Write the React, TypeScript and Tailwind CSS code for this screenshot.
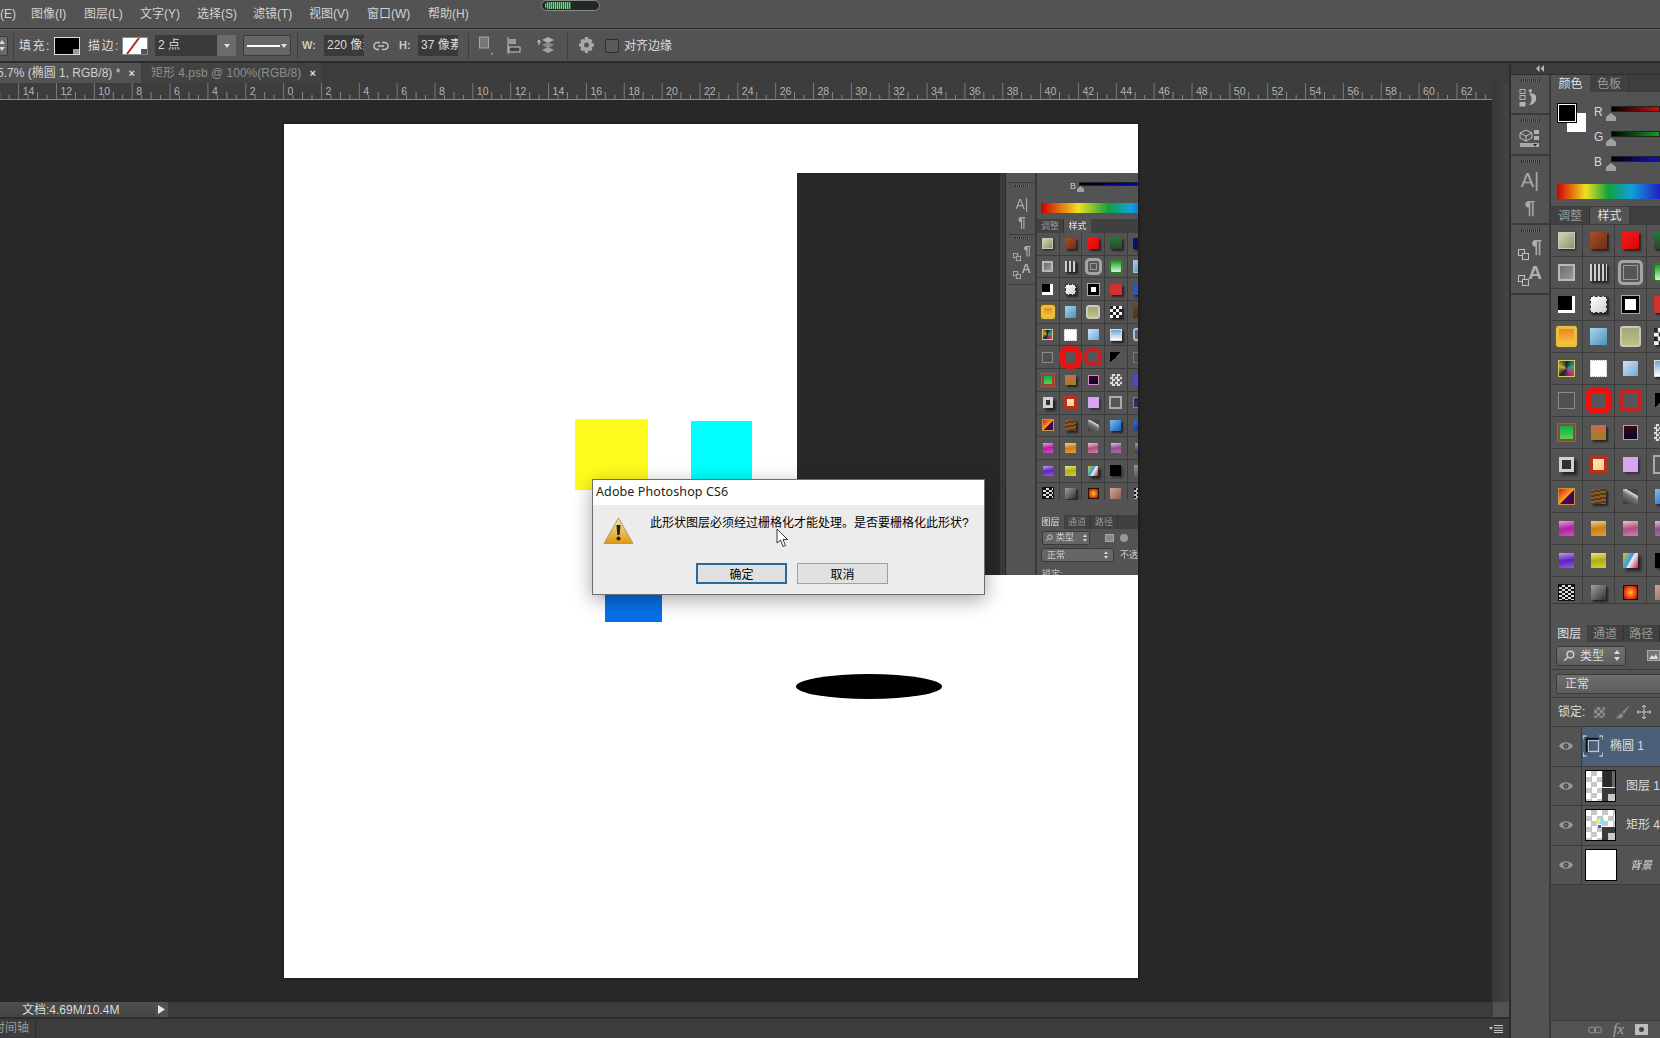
import React from "react";

const SWATCHES: string[] = [
  "w-[52%] h-[52%] bg-[linear-gradient(135deg,#d4d4b8,#8f8f70)] border border-[#c8c8b4] shadow-[1px_1px_2px_#222]",
  "w-[52%] h-[52%] bg-[linear-gradient(135deg,#a8502c,#6e2c14)] shadow-[2px_2px_2px_#222]",
  "w-[52%] h-[52%] bg-[linear-gradient(135deg,#f81818,#d80808)] shadow-[2px_2px_2px_#222]",
  "w-[52%] h-[52%] bg-[linear-gradient(180deg,#1e7a32,#33422a)] shadow-[2px_2px_2px_#222]",
  "w-[52%] h-[52%] bg-[linear-gradient(135deg,#0a1a80,#060a30)] shadow-[2px_2px_2px_#222]",

  "w-[52%] h-[52%] bg-[linear-gradient(135deg,#6c6c6c,#9a9a9a)] border-2 border-[#b8b8b8]",
  "w-[52%] h-[52%] bg-[repeating-linear-gradient(90deg,#cfcfcf_0_2px,#3a3a3a_2px_4px)] shadow-[2px_2px_2px_#222]",
  "w-[78%] h-[78%] bg-[#555555] rounded-[5px] border-[3px] border-[#a4a4a4] outline outline-1 -outline-offset-[6px] outline-[#999999]",
  "w-[58%] h-[58%] bg-[linear-gradient(180deg,#1f9a26,#d8f4d8)] rounded-[2px] border border-[#2a7a22] shadow-[0_0_3px_#3a9a30]",
  "w-[52%] h-[62%] bg-[linear-gradient(135deg,#9cc8e0,#5a90b8)] border border-[#a8c4d4]",

  "w-[52%] h-[52%] bg-black border-r-[3px] border-b-[3px] border-white",
  "w-[52%] h-[52%] bg-[linear-gradient(135deg,#ffffff,#cfcfcf)] border border-dashed border-[#333333] shadow-[2px_2px_2px_#222]",
  "w-[52%] h-[52%] bg-white border-[3px] border-black outline outline-1 outline-[#aaaaaa]",
  "w-[52%] h-[52%] bg-[#d03030] shadow-[2px_2px_2px_#222]",
  "w-[52%] h-[52%] bg-[#3550c8] shadow-[2px_2px_2px_#222]",

  "w-[66%] h-[66%] bg-[linear-gradient(180deg,#e88a20,#ffc040)] border-[3px] border-[#e8c040] rounded-[2px] outline outline-1 outline-[#7a5a10]",
  "w-[52%] h-[52%] bg-[linear-gradient(135deg,#a8d8ee,#4c90b8)]",
  "w-[66%] h-[66%] bg-[linear-gradient(180deg,#a4a478,#c0c088)] border-2 border-[#c8c8c0] rounded-[3px]",
  "w-[58%] h-[58%] bg-[repeating-conic-gradient(#f4f4f4_0_25%,#222222_0_50%)] bg-size-[50%_50%] shadow-[2px_2px_2px_#222]",
  "w-[52%] h-[52%] bg-[linear-gradient(135deg,#6a4a10,#3a2a10)]",

  "w-[52%] h-[52%] bg-[conic-gradient(#123,#2a8,#c28,#123,#ca3,#123)] border border-[#d8c860]",
  "w-[56%] h-[56%] bg-white border border-dotted border-[#bbbbbb]",
  "w-[50%] h-[50%] bg-[linear-gradient(135deg,#cfe4f4,#6ea8dc)]",
  "w-[56%] h-[56%] bg-[linear-gradient(180deg,#6aa4dc,#ffffff)] border border-[#dddddd] shadow-[2px_2px_2px_#222]",
  "w-[52%] h-[62%] bg-[#556688] rounded-[3px] border-2 border-[#b0c0d0]",

  "w-[52%] h-[52%] bg-[#505050] border border-[#8a8a8a]",
  "w-[50%] h-[50%] bg-[#565656] rounded-[3px] outline outline-[6px] outline-[#ee1010]",
  "w-[48%] h-[48%] bg-[#565656] rounded-[2px] outline outline-[4px] outline-[#c82020]",
  "w-[50%] h-[50%] bg-[linear-gradient(135deg,#000000_50%,#555555_50%)]",
  "w-[52%] h-[52%] bg-[#505050] border border-[#777777]",

  "w-[56%] h-[56%] bg-[linear-gradient(180deg,#0cb040,#5ed050)] border-2 border-[#8a4a3a] outline outline-1 outline-[#c05040]",
  "w-[50%] h-[50%] bg-[linear-gradient(180deg,#c86a50,#a08020)] shadow-[2px_2px_2px_#222]",
  "w-[50%] h-[50%] bg-[linear-gradient(180deg,#400818,#05052a)] border border-[#d888c0]",
  "w-[52%] h-[52%] bg-[repeating-conic-gradient(#dddddd_0_25%,#666666_0_50%)] bg-size-[5px_5px]",
  "w-[40%] h-[52%] bg-[#4a4ad0] shadow-[0_0_3px_#4a4ad0]",

  "w-[48%] h-[48%] bg-[#303030] border-[3px] border-[#d0d0d0] shadow-[3px_3px_3px_#222]",
  "w-[58%] h-[58%] bg-[linear-gradient(135deg,#fff0c0,#ffc878)] border-[3px] border-[#b83020]",
  "w-[50%] h-[50%] bg-[#d8a4ec] shadow-[2px_2px_2px_#334]",
  "w-[60%] h-[60%] bg-[#555555] border-2 border-[#aaaaaa]",
  "w-[48%] h-[52%] bg-[#3a2a5a] border border-[#8a7aa0]",

  "w-[56%] h-[56%] bg-[linear-gradient(135deg,#d81818,#ffa020_50%,#40085a_55%)] border border-[#c89040]",
  "w-[50%] h-[50%] bg-[repeating-linear-gradient(170deg,#8a5a28_0_2px,#5a3a18_2px_4px)] shadow-[2px_2px_2px_#222]",
  "w-[50%] h-[50%] bg-[linear-gradient(30deg,#333333,#777777_50%,#dddddd_70%,#444444_72%)]",
  "w-[50%] h-[50%] bg-[linear-gradient(135deg,#80c0f0,#1060b0)] shadow-[2px_2px_2px_#222]",
  "w-[40%] h-[50%] bg-[linear-gradient(135deg,#3070e0,#102060)]",

  "w-[48%] h-[48%] bg-[linear-gradient(170deg,#e8a0e0,#b020a0_50%,#d050c0)]",
  "w-[48%] h-[48%] bg-[linear-gradient(170deg,#f0d090,#c88010_50%,#e0a040)]",
  "w-[48%] h-[48%] bg-[linear-gradient(170deg,#f0c0d8,#b05080_50%,#d080a8)]",
  "w-[48%] h-[48%] bg-[linear-gradient(170deg,#e0c0e0,#905090_50%,#b070b0)]",
  "w-[36%] h-[48%] bg-[linear-gradient(170deg,#a090c0,#402060)]",

  "w-[48%] h-[48%] bg-[linear-gradient(170deg,#c0a0f0,#6020c0_50%,#9060e0)]",
  "w-[48%] h-[48%] bg-[linear-gradient(170deg,#e8e880,#b0b010_50%,#d0d040)]",
  "w-[48%] h-[48%] bg-[linear-gradient(120deg,#e0c020,#30a0e0_45%,#f0f0f0_55%,#c02040)] shadow-[3px_3px_3px_#222]",
  "w-[50%] h-[50%] bg-black shadow-[2px_2px_2px_#333]",
  "w-[40%] h-[50%] bg-[linear-gradient(135deg,#999999,#444444)]",

  "w-[56%] h-[56%] bg-[repeating-conic-gradient(#dddddd_0_25%,#111111_0_50%)] bg-size-[6px_4px] border border-[#111111]",
  "w-[50%] h-[50%] bg-[linear-gradient(135deg,#a0a0a0,#303030)] shadow-[2px_2px_2px_#222]",
  "w-[50%] h-[50%] bg-[radial-gradient(circle,#ffc030,#e03010_70%,#801000)] border border-[#201000]",
  "w-[50%] h-[50%] bg-[linear-gradient(135deg,#d0a898,#906050)]",
  "w-[44%] h-[50%] bg-[repeating-conic-gradient(#bbbbbb_0_25%,#111111_0_50%)] bg-size-[5px_4px]",
];

function StyleGrid({ small }: { small?: boolean }) {
  return (
    <div className={small ? "h-[267px] overflow-hidden" : "h-[378px] shrink-0 overflow-hidden"}>
      <div className={small ? "grid grid-cols-[repeat(5,22.7px)] auto-rows-[22.7px]" : "grid grid-cols-[repeat(5,32px)] auto-rows-[32px]"}>
        {SWATCHES.map((c, i) => (
          <div key={i} className="flex items-center justify-center border-r border-b border-[#3c3c3c]">
            <div className={c} />
          </div>
        ))}
      </div>
    </div>
  );
}

function Tabs({ items, active, small }: { items: string[]; active: number; small?: boolean }) {
  return (
    <div className={small ? "flex h-[14px] bg-[#404040] text-[9px]" : "flex h-[17px] shrink-0 bg-[#3e3e3e] text-[12px]"}>
      {items.map((t, i) => (
        <div
          key={t}
          className={
            (small ? "w-[27px] " : "w-[39px] ") +
            (i === active ? "bg-[#535353] text-[#e0e0e0] " : "bg-[#414141] text-[#9a9a9a] border-r border-[#333333] ") +
            "flex items-center justify-center leading-none"
          }
        >
          {t}
        </div>
      ))}
    </div>
  );
}

function Stepper({ small }: { small?: boolean }) {
  return (
    <svg width={small ? 4 : 6} height={small ? 8 : 11} viewBox="0 0 6 11" className="shrink-0">
      <path d="M3 0 6 4H0zM3 11 0 7h6z" fill="#d8d8d8" />
    </svg>
  );
}

function Search({ s = 12 }: { s?: number }) {
  return (
    <svg width={s} height={s} viewBox="0 0 12 12" fill="none" stroke="#cfcfcf" strokeWidth="1.4">
      <circle cx="7.4" cy="4.6" r="3.4" />
      <path d="M5 7 1.2 10.8" />
    </svg>
  );
}

function Eye() {
  return (
    <svg width="14" height="10" viewBox="0 0 14 10">
      <path d="M0 5C2.500 0 11.500 0 14 5 11.500 10 2.500 10 0 5z" fill="#989898" />
      <circle cx="7" cy="5" r="2.600" fill="#484848" />
      <circle cx="7" cy="5" r="1.100" fill="#7a7a7a" />
    </svg>
  );
}

function Chevrons() {
  return (
    <svg width="8" height="7" viewBox="0 0 8 7" fill="#b8b8b8">
      <path d="M3.5 0v7L0 3.500zM8 0v7L4.500 3.500z" />
    </svg>
  );
}

function Grip({ small }: { small?: boolean }) {
  return <div className={(small ? "w-[14px] h-[2px]" : "w-[19px] h-[3px]") + " mx-auto bg-[repeating-linear-gradient(90deg,#2c2c2c_0_1px,#6a6a6a_1px_2px)]"} />;
}

function HistoryIcon() {
  return (
    <svg width="22" height="18" viewBox="0 0 22 18" fill="none">
      <rect x="1" y="0.500" width="5" height="4" stroke="#b4b4b4" />
      <rect x="1" y="6.500" width="5" height="4" stroke="#b4b4b4" />
      <rect x="0.500" y="13" width="6" height="4.500" fill="#b4b4b4" />
      <path d="M10 5C16 3 18 7 17 11 16 14 13 16 10 16 13 13 14 8 10 5z" fill="#b4b4b4" />
      <path d="M9 1 13 0 12 5z" fill="#b4b4b4" />
    </svg>
  );
}

function CubeIcon() {
  return (
    <svg width="22" height="20" viewBox="0 0 22 20" fill="none">
      <path d="M7 1 13 4V9L7 12 1 9V4z" stroke="#c0c0c0" />
      <path d="M1 4 7 7 13 4M7 7V12" stroke="#c0c0c0" />
      <rect x="15" y="1" width="5" height="4" fill="#b0b0b0" />
      <rect x="15" y="7" width="5" height="4" fill="#b0b0b0" />
      <rect x="1" y="14" width="19" height="4" fill="#a8a8a8" />
      <path d="M14 15h4l-2 2.500z" fill="#222222" />
    </svg>
  );
}

function StackedGlyph({ glyph, small }: { glyph: string; small?: boolean }) {
  return (
    <div className={(small ? "w-[18px] h-[16px]" : "w-[24px] h-[22px]") + " relative"}>
      <span className={(small ? "text-[13px]" : "text-[19px]") + " absolute right-0 -top-[1px] leading-none font-bold text-[#b0b0b0]"}>{glyph}</span>
      <svg className="absolute left-0 bottom-0" width={small ? 8 : 11} height={small ? 8 : 11} viewBox="0 0 11 11" fill="none" stroke="#c0c0c0">
        <rect x="0.500" y="0.500" width="6" height="6" />
        <rect x="4.500" y="4.500" width="6" height="6" fill="#535353" />
      </svg>
    </div>
  );
}

function Thumb({ kind }: { kind: "layer" | "shape" | "bg" }) {
  if (kind === "bg") return <div className="w-[32px] h-[32px] bg-white border border-black" />;
  return (
    <div className="relative w-[32px] h-[32px] border border-black bg-[repeating-conic-gradient(#c8c8c8_0_25%,#ffffff_0_50%)] bg-size-[11px_11px]">
      {kind === "layer" ? (
        <div className="absolute right-0 top-0 w-[13px] h-[16px] bg-[#2a2a2a] border-l border-[#555555]">
          <div className="ml-auto w-[3px] h-full bg-[#6a6a6a]" />
        </div>
      ) : (
        <>
          <div className="absolute left-[10px] top-[9px] w-[4px] h-[5px] bg-[#e8ee70]" />
          <div className="absolute left-[14px] top-[9px] w-[4px] h-[5px] bg-[#70eeee]" />
          <div className="absolute left-[12px] top-[15px] w-[3px] h-[3px] bg-[#2a6ac8]" />
        </>
      )}
      <div className="absolute right-0 bottom-0 w-[13px] h-[13px] bg-[#3a3a3a] flex items-end justify-end">
        <div className="w-[9px] h-[9px] bg-[#c8c8c8] border-l-2 border-t-2 border-[#3a3a3a]" />
      </div>
    </div>
  );
}

function LayerRow({ children, selected }: { children: React.ReactNode; selected?: boolean }) {
  return (
    <div className="flex h-[39.500px] shrink-0 border-b border-[#3a3a3a]">
      <div className="w-[31px] flex items-center justify-center border-r border-[#3a3a3a]">
        <Eye />
      </div>
      <div className={(selected ? "bg-[#4c5f78] " : "") + "flex-1 flex items-center pl-[3px] whitespace-nowrap overflow-hidden"}>{children}</div>
    </div>
  );
}

const MENU: [string, string][] = [
  ["编辑(E)", "w-[55px] -ml-[24px]"],
  ["图像(I)", "w-[53px]"],
  ["图层(L)", "w-[56px]"],
  ["文字(Y)", "w-[57px]"],
  ["选择(S)", "w-[56px]"],
  ["滤镜(T)", "w-[56px]"],
  ["视图(V)", "w-[58px]"],
  ["窗口(W)", "w-[61px]"],
  ["帮助(H)", "w-[113px]"],
];

function MenuBar() {
  return (
    <div className="h-[29px] shrink-0 flex items-center bg-[#535353] border-b border-[#2c2c2c] text-[12px] text-[#d2d2d2] overflow-hidden whitespace-nowrap">
      {MENU.map(([t, c]) => (
        <span key={t} className={c + " shrink-0"}>{t}</span>
      ))}
      <div className="shrink-0 -mt-[17px] w-[59px] h-[11px] rounded-full bg-[#1f2a26] border border-[#8a8a8a] flex items-center pl-[3px]">
        <div className="w-[26px] h-[7px] rounded-l-sm bg-[repeating-linear-gradient(90deg,#7fd07f_0_1px,#2f6a3a_1px_2px)]" />
      </div>
    </div>
  );
}

function Divider({ className }: { className: string }) {
  return <div className={className + " w-px h-[26px] bg-[#3e3e3e] shrink-0"} />;
}

function OptionsBar() {
  return (
    <div className="h-[34px] shrink-0 flex items-center bg-[#535353] border-t border-[#626262] border-b-2 border-b-[#2c2c2c] text-[12px] text-[#dcdcdc] whitespace-nowrap overflow-hidden">
      <div className="-ml-[10px] w-[18px] h-[20px] bg-[#6a6a6a] rounded-r-[2px] border border-[#3a3a3a] flex items-center justify-end pr-[2px] shrink-0"><Stepper /></div>
      <Divider className="ml-[5px]" />
      <span className="ml-[5px] w-[30px] shrink-0 tracking-[1.5px]">填充:</span>
      <div className="ml-[5px] w-[26px] h-[18px] bg-black border border-[#dddddd] relative shrink-0">
        <div className="absolute right-0 bottom-0 w-[6px] h-[5px] bg-[#999999]" />
      </div>
      <span className="ml-[8px] w-[30px] shrink-0 tracking-[1.5px]">描边:</span>
      <div className="ml-[4px] w-[26px] h-[18px] bg-white border border-[#888888] relative shrink-0 overflow-hidden">
        <svg width="24" height="16" className="absolute left-0 top-0"><path d="M4 16 16 0" stroke="#a83232" strokeWidth="2" /></svg>
        <div className="absolute right-0 bottom-0 w-[6px] h-[5px] bg-[#555555]" />
      </div>
      <div className="ml-[7px] w-[81px] h-[21px] flex shrink-0 bg-[#3a3a3a]">
        <span className="flex-1 pl-[3px] leading-[21px]">2 点</span>
        <div className="w-[19px] bg-[#6b6b6b] flex items-center justify-center">
          <svg width="6" height="4"><path d="M0 0h6L3 4z" fill="#e0e0e0" /></svg>
        </div>
      </div>
      <div className="ml-[7px] w-[48px] h-[21px] shrink-0 rounded-[2px] bg-[#666666] border border-[#3a3a3a] flex items-center px-[3px] gap-[1px]">
        <div className="flex-1 h-[2px] bg-white" />
        <svg width="6" height="4"><path d="M0 0h6L3 4z" fill="#e0e0e0" /></svg>
      </div>
      <Divider className="ml-[6px]" />
      <span className="ml-[4px] w-[16px] font-bold text-[11px] shrink-0 text-[#c8c8c8]">W:</span>
      <div className="ml-[6px] w-[40px] h-[21px] bg-[#3a3a3a] overflow-hidden pl-[3px] leading-[21px] shrink-0">220 像素</div>
      <svg className="ml-[9px] shrink-0" width="16" height="10" viewBox="0 0 16 10" fill="none" stroke="#c4c4c4" strokeWidth="1.500">
        <path d="M7 1.500H4.500a3.500 3.500 0 0 0 0 7H6" />
        <path d="M9 1.500h2.500a3.500 3.500 0 0 1 0 7H9" />
        <path d="M5 5h6" />
      </svg>
      <span className="ml-[10px] w-[13px] font-bold text-[11px] shrink-0 text-[#c8c8c8]">H:</span>
      <div className="ml-[6px] w-[40px] h-[21px] bg-[#3a3a3a] overflow-hidden pl-[3px] leading-[21px] shrink-0">37 像素</div>
      <Divider className="ml-[10px]" />
      <svg className="ml-[10px] shrink-0" width="14" height="20" viewBox="0 0 14 20">
        <rect x="0.500" y="1" width="9" height="11" fill="#777777" stroke="#a8a8a8" />
        <path d="M12 17h2l-1 2z" fill="#c8c8c8" />
      </svg>
      <svg className="ml-[14px] shrink-0" width="16" height="20" viewBox="0 0 16 20">
        <path d="M1 1V18" stroke="#c8c8c8" />
        <rect x="2" y="3" width="7" height="5" fill="#9a9a9a" />
        <rect x="2" y="11" width="11" height="5" fill="#444444" stroke="#c8c8c8" />
      </svg>
      <svg className="ml-[14px] shrink-0" width="20" height="20" viewBox="0 0 20 20">
        <path d="M11 1 17 4 11 7 5 4z" fill="#b0b0b0" />
        <path d="M11 6 17 9 11 12 5 9z" fill="#8a8a8a" />
        <path d="M11 11 17 14 11 17 5 14z" fill="#a0a0a0" />
        <path d="M2 9V5M0.500 6.500 2 4l1.500 2.500" stroke="#d0d0d0" fill="none" />
      </svg>
      <Divider className="ml-[10px]" />
      <svg className="ml-[10px] shrink-0" width="18" height="18" viewBox="0 0 18 18">
        <path d="M7 0h3l.5 2.500 2-.8 2 2-1 2 2.500.8v3l-2.500.6 1 2.200-2 2-2.100-1L10 16H7l-.5-2.700-2.200 1-2-2 1-2.200L1 9.500v-3l2.300-.6-1-2.200 2-2 2.200 1z" fill="#a8a8a8" />
        <circle cx="8.500" cy="8" r="2.500" fill="#555555" />
      </svg>
      <div className="ml-[9px] w-[14px] h-[14px] rounded-[2px] bg-[#5a5a5a] border border-[#2e2e2e] shrink-0" />
      <span className="ml-[5px] shrink-0">对齐边缘</span>
    </div>
  );
}

function Ruler() {
  const step = 37.85;
  const ticks: React.ReactNode[] = [];
  for (let n = -16; n <= 62; n += 2) {
    const x = 283.6 + (n / 2) * step;
    ticks.push(
      <g key={n}>
        <path d={`M${x} 0V16`} stroke="#7a7a7a" />
        <path d={`M${x + step / 4} 12V16M${x + step / 2} 9V16M${x + (3 * step) / 4} 12V16`} stroke="#8a8a8a" />
        <text x={x + 4} y={12} fontSize="10.500" fill="#b4b4b4" fontFamily="Liberation Sans">{Math.abs(n)}</text>
      </g>
    );
  }
  return (
    <svg width="1492" height="17" className="block">
      <rect width="1492" height="17" fill="#3d3d3d" />
      {ticks}
      <path d="M0 16.500H1492" stroke="#8a8a8a" />
    </svg>
  );
}

function Warning() {
  return (
    <svg width="31" height="28" viewBox="0 0 31 28">
      <defs>
        <linearGradient id="w" x1="0" y1="0" x2="0" y2="1">
          <stop offset="0" stopColor="#f8e8a0" />
          <stop offset="1" stopColor="#dc9a10" />
        </linearGradient>
      </defs>
      <path d="M15.500 1 30 26.500H1z" fill="url(#w)" stroke="#a89a70" strokeLinejoin="round" />
      <path d="M13.500 8h4l-.8 10h-2.400z" fill="#222222" />
      <circle cx="15.500" cy="21.500" r="2" fill="#222222" />
    </svg>
  );
}

function Dialog() {
  return (
    <div className="absolute left-[308px] top-[355px] w-[393px] h-[116px] bg-[#ececec] border border-[#6e6e6e] shadow-[0_5px_18px_rgba(0,0,0,0.35)] text-black flex flex-col">
      <div className="h-[25px] shrink-0 bg-white pl-[3px] pb-[1px] flex items-center text-[12.500px] font-['Noto_Sans','Noto_Sans_CJK_SC',sans-serif] tracking-[0.1px] text-[#222222]">
        Adobe Photoshop CS6
      </div>
      <div className="flex pl-[10px] pt-[12px] h-[58px]">
        <Warning />
        <div className="ml-[16px] -mt-[3px] text-[12px] leading-[18px] whitespace-nowrap">此形状图层必须经过栅格化才能处理。是否要栅格化此形状?</div>
      </div>
      <div className="flex pl-[103px] gap-[10px]">
        <button className="w-[91px] h-[21px] pt-[2px] bg-[#e1e1e1] border-2 border-[#2a6a98] text-[12px] leading-none">确定</button>
        <button className="w-[91px] h-[21px] pt-[2px] bg-[#e1e1e1] border border-[#a0a0a0] text-[12px] leading-none">取消</button>
      </div>
      <svg className="absolute left-[183px] top-[48px]" width="13" height="20" viewBox="0 0 13 20">
        <path d="M1 1V15L4.500 12 7 18.500 9.500 17.500 7 11.500H11.500z" fill="white" stroke="#222222" strokeWidth="0.900" />
      </svg>
    </div>
  );
}

function EmbeddedShot() {
  return (
    <div className="absolute left-[513px] top-[49px] w-[341px] h-[402px] overflow-hidden flex bg-[#282828] text-[#cccccc] blur-[0.35px]">
      <div className="w-[203px] shrink-0" />
      <div className="w-[6px] shrink-0 bg-[#3a3a3a] border-r border-[#2a2a2a]" />
      <div className="w-[3px] shrink-0 bg-[#535353]" />
      <div className="w-[27px] shrink-0 bg-[#535353] flex flex-col items-center text-[#aaaaaa] pt-[9px] border-r border-[#3a3a3a]">
        <div className="w-full border-t border-[#3a3a3a] pt-[2px]"><Grip small /></div>
        <span className="mt-[8px] text-[14px] leading-[18px]">A|</span>
        <span className="text-[14px] leading-[18px] font-bold">¶</span>
        <div className="w-full mt-[3px] border-t border-[#3a3a3a] pt-[2px]"><Grip small /></div>
        <div className="mt-[6px] flex flex-col items-center gap-[2px]">
          <StackedGlyph glyph="¶" small />
          <StackedGlyph glyph="A" small />
        </div>
        <div className="w-full mt-[5px] border-t border-[#3a3a3a]" />
      </div>
      <div className="flex-1 min-w-0 bg-[#535353] border-l border-[#3a3a3a] overflow-hidden">
        <div className="relative h-[22px] pl-[33px] flex items-center gap-[3px] text-[9px]">
          <span className="mt-[4px] leading-none">B</span>
          <div className="flex-1 h-[4px] bg-[linear-gradient(90deg,#000000,#0000c8)] border border-[#222222]" />
          <svg className="absolute left-[40px] top-[13px]" width="7" height="6"><path d="M3.500 0 7 3V6H0V3z" fill="#a0a0a0" /></svg>
        </div>
        <div className="ml-[4px] mt-[8px] h-[10px] w-[150px] bg-[linear-gradient(90deg,#d00000,#f0e020_25%,#10a040_45%,#10a0e0_60%,#2020c0_78%,#b010b0)]" />
        <div className="mt-[6px]"><Tabs small items={["调整", "样式"]} active={1} /></div>
        <StyleGrid small />
        <div className="h-[15px]" />
        <Tabs small items={["图层", "通道", "路径"]} active={0} />
        <div className="h-[17px] flex items-center pl-[5px] text-[9px]">
          <div className="w-[48px] h-[14px] bg-[#666666] rounded-[2px] border border-[#3a3a3a] flex items-center gap-[3px] px-[2px]">
            <Search s={8} /><span className="flex-1 leading-none">类型</span><Stepper small />
          </div>
          <div className="ml-[15px] w-[9px] h-[8px] bg-[#888888] border border-[#aaaaaa]" />
          <div className="ml-[6px] w-[8px] h-[8px] rounded-full bg-[#999999]" />
        </div>
        <div className="h-[18px] flex items-center pl-[4px] text-[9px] whitespace-nowrap">
          <div className="w-[77px] h-[14px] bg-[#666666] rounded-[2px] border border-[#3a3a3a] flex items-center px-[5px]"><span className="flex-1 leading-none">正常</span><Stepper small /></div>
          <span className="ml-[6px] leading-none">不透</span>
        </div>
        <div className="h-[14px] pl-[5px] pt-[3px] text-[9px] leading-[14px]">锁定:</div>
      </div>
    </div>
  );
}

function Workspace() {
  return (
    <div className="w-[1511px] shrink-0 flex flex-col border-r-2 border-[#2c2c2c] bg-[#282828]">
      <div className="h-[20px] shrink-0 flex bg-[#3c3c3c] text-[12px] whitespace-nowrap">
        <div className="w-[141px] bg-[#535353] flex items-center justify-between pr-[6px] text-[#cfcfcf] overflow-hidden">
          <span className="-ml-[3px]">5.7% (椭圆 1, RGB/8) *</span>
          <span className="text-[#dddddd] text-[11px] font-bold leading-none">×</span>
        </div>
        <div className="ml-px w-[180px] bg-[#424242] flex items-center justify-between pl-[9px] pr-[6px] text-[#8e8e8e]">
          <span>矩形 4.psb @ 100%(RGB/8)</span>
          <span className="text-[#dddddd] text-[11px] font-bold leading-none">×</span>
        </div>
      </div>
      <div className="flex-1 min-h-0 flex">
        <div className="w-[1492px] shrink-0 flex flex-col">
          <div className="h-[17px] shrink-0"><Ruler /></div>
          <div className="flex-1 min-h-0 pl-[284px] pt-[24px]">
            <div className="relative w-[854px] h-[854px] bg-white shadow-[0_0_3px_#111]">
              <div className="absolute left-[291px] top-[295px] w-[73px] h-[71px] bg-[#fffb1e]" />
              <div className="absolute left-[407px] top-[297px] w-[61px] h-[62px] bg-[#00ffff]" />
              <div className="absolute left-[321px] top-[460px] w-[57px] h-[38px] bg-[#0670e8]" />
              <div className="absolute left-[512px] top-[550px] w-[146px] h-[25px] rounded-[50%] bg-black" />
              <EmbeddedShot />
              <Dialog />
            </div>
          </div>
        </div>
        <div className="flex-1 bg-[linear-gradient(90deg,#383838,#444444)]" />
      </div>
      <div className="h-[16px] shrink-0 flex bg-[#3c3c3c] border-b border-[#2c2c2c]">
        <div className="w-[155px] bg-[linear-gradient(180deg,#4e4e4e,#444444)] pl-[22px] text-[12px] leading-[16px] text-[#dcdcdc] whitespace-nowrap">文档:4.69M/10.4M</div>
        <div className="w-[13px] bg-[#505050] flex items-center justify-center">
          <svg width="7" height="9"><path d="M0 0 7 4.500 0 9z" fill="#e8e8e8" /></svg>
        </div>
        <div className="flex-1 bg-[#3c3c3c]" />
        <div className="w-[16px] bg-[#525252]" />
      </div>
      <div className="h-[20px] shrink-0 flex items-center bg-[#3c3c3c] border-t border-[#2e2e2e] text-[12px] text-[#9a9a9a] whitespace-nowrap">
        <div className="w-[36px] h-full border-r border-[#2a2a2a] overflow-hidden">
          <span className="block -ml-[7px] leading-[18px]">时间轴</span>
        </div>
        <svg className="ml-auto mr-[6px]" width="14" height="8" viewBox="0 0 14 8">
          <path d="M0 2h4L2 5zM5 0h9v1H5zM5 2.500h9v1H5zM5 5h9v1H5zM5 7h9v1H5z" fill="#c4c4c4" />
        </svg>
      </div>
    </div>
  );
}

function Dock() {
  return (
    <div className="w-[40px] shrink-0 flex flex-col bg-[#535353] border-r-2 border-[#3a3a3a]">
      <div className="h-[40px] border-b-2 border-[#3a3a3a] pt-[4px] flex flex-col items-center">
        <Grip />
        <div className="mt-[7px]"><HistoryIcon /></div>
      </div>
      <div className="h-[41px] border-b-2 border-[#3a3a3a] pt-[4px] flex flex-col items-center">
        <Grip />
        <div className="mt-[7px]"><CubeIcon /></div>
      </div>
      <div className="h-[69px] border-b-2 border-[#3a3a3a] pt-[4px] flex flex-col items-center text-[#a8a8a8]">
        <Grip />
        <span className="mt-[5px] text-[20px] leading-[24px]">A|</span>
        <span className="mt-[4px] text-[19px] leading-[24px] font-bold">¶</span>
      </div>
      <div className="h-[70px] border-b-2 border-[#3a3a3a] pt-[4px] flex flex-col items-center">
        <Grip />
        <div className="mt-[6px] flex flex-col gap-[4px]">
          <StackedGlyph glyph="¶" />
          <StackedGlyph glyph="A" />
        </div>
      </div>
    </div>
  );
}

function Slider({ label, bar }: { label: string; bar: string }) {
  return (
    <div className="h-[25px] flex items-center pl-[43px] relative">
      <span className="w-[17px] text-[12px] leading-none text-[#d8d8d8]">{label}</span>
      <div className={bar + " flex-1 h-[6px] -mt-[6px] border border-[#222222]"} />
      <svg className="absolute left-[55px] top-[14px]" width="10" height="8"><path d="M5 0 10 4V8H0V4z" fill="#a0a0a0" /></svg>
    </div>
  );
}

function Panels() {
  return (
    <div className="flex-1 min-w-0 flex flex-col overflow-hidden bg-[#535353] whitespace-nowrap text-[#dcdcdc]">
      <Tabs items={["颜色", "色板"]} active={0} />
      <div className="h-[115px] shrink-0 relative border-b border-[#3a3a3a] pt-[7px]">
        <div className="absolute left-[16px] top-[21px] w-[19px] h-[19px] bg-white" />
        <div className="absolute left-[6px] top-[11px] w-[20px] h-[20px] bg-black border border-black outline outline-1 -outline-offset-2 outline-white" />
        <Slider label="R" bar="bg-[linear-gradient(90deg,#000000,#c81010)]" />
        <Slider label="G" bar="bg-[linear-gradient(90deg,#000000,#10a020)]" />
        <Slider label="B" bar="bg-[linear-gradient(90deg,#000000,#1010c8)]" />
        <div className="absolute left-[6px] top-[92px] right-0 h-[15px] bg-[linear-gradient(90deg,#d00000,#f0e020_28%,#10a040_50%,#10a0e0_72%,#2020c0_100%)]" />
      </div>
      <Tabs items={["调整", "样式"]} active={1} />
      <div className="h-px shrink-0 bg-[#3c3c3c]" />
      <StyleGrid />
      <div className="h-[22px] shrink-0 border-t border-[#3a3a3a]" />
      <Tabs items={["图层", "通道", "路径"]} active={0} />
      <div className="h-[28px] shrink-0 flex items-center pl-[5px] border-b border-[#3a3a3a] text-[12px]">
        <div className="w-[70px] h-[20px] shrink-0 rounded-[3px] bg-[linear-gradient(180deg,#707070,#5e5e5e)] border border-[#3a3a3a] flex items-center pl-[6px] gap-[5px] pr-[5px]">
          <Search />
          <span className="flex-1 leading-none">类型</span>
          <Stepper />
        </div>
        <svg className="ml-[21px] shrink-0" width="13" height="11" viewBox="0 0 13 11">
          <rect x="0.500" y="0.500" width="12" height="10" fill="#777777" stroke="#aaaaaa" />
          <path d="M2 9 5 5l2 2 2-3 2 5z" fill="#dddddd" />
        </svg>
      </div>
      <div className="h-[28px] shrink-0 flex items-center pl-[5px] border-b border-[#3a3a3a] text-[12px]">
        <div className="w-[120px] h-[20px] shrink-0 rounded-[2px] bg-[linear-gradient(180deg,#6e6e6e,#5c5c5c)] border border-[#3a3a3a] flex items-center pl-[8px] pr-[8px]">
          <span className="flex-1 leading-none">正常</span>
          <Stepper />
        </div>
      </div>
      <div className="h-[29px] shrink-0 flex items-center pl-[7px] border-b border-[#3a3a3a] text-[12px]">
        <span className="w-[30px] shrink-0">锁定:</span>
        <div className="ml-[6px] w-[11px] h-[11px] shrink-0 bg-[repeating-conic-gradient(#8a8a8a_0_25%,#626262_0_50%)] bg-size-[6px_6px]" />
        <svg className="ml-[10px] shrink-0" width="16" height="14" viewBox="0 0 16 14"><path d="M15 0 7 7 9 9zM6 8C4 9 4 12 0 13 4 14 9 13 8 10z" fill="#8a8a8a" /></svg>
        <svg className="ml-[6px] shrink-0" width="14" height="14" viewBox="0 0 14 14" fill="none" stroke="#c8c8c8"><path d="M7 0V14M0 7H14M5 2 7 0l2 2M5 12l2 2 2-2M2 5 0 7l2 2M12 5l2 2-2 2" /></svg>
      </div>
      <LayerRow selected>
        <svg width="20" height="22" viewBox="0 0 22 22" className="shrink-0 -ml-[2px]" fill="none">
          <rect x="3" y="2" width="4" height="16" fill="#111111" />
          <rect x="3" y="2" width="14" height="3" fill="#111111" />
          <path d="M0 4V0H4M18 0H22V4M22 18V22H18M4 22H0V18" stroke="white" />
          <rect x="6" y="5" width="11" height="12" stroke="#b4c4d4" strokeWidth="1.500" />
        </svg>
        <span className="ml-[7px] text-[12px]">椭圆 1</span>
      </LayerRow>
      <LayerRow>
        <Thumb kind="layer" />
        <span className="ml-[10px] text-[12px]">图层 1</span>
      </LayerRow>
      <LayerRow>
        <Thumb kind="shape" />
        <span className="ml-[10px] text-[12px]">矩形 4</span>
      </LayerRow>
      <LayerRow>
        <Thumb kind="bg" />
        <span className="ml-[13px] text-[11px] italic">背景</span>
      </LayerRow>
      <div className="flex-1 bg-[#484848]" />
      <div className="h-[18px] shrink-0 flex items-center border-t border-[#3a3a3a] bg-[#535353] text-[#a8a8a8]">
        <svg className="ml-[37px] shrink-0" width="14" height="8" viewBox="0 0 14 8" fill="none" stroke="#9a9a9a"><rect x="0.500" y="1" width="7" height="6" rx="3" /><rect x="6.500" y="1" width="7" height="6" rx="3" /></svg>
        <span className="ml-[11px] font-['Liberation_Serif',serif] italic text-[15px] leading-none">fx</span>
        <div className="ml-[11px] w-[13px] h-[11px] bg-[#bdbdbd] flex items-center justify-center"><div className="w-[5px] h-[5px] rounded-full bg-[#444444]" /></div>
      </div>
    </div>
  );
}

export default function App() {
  return (
    <div className="w-[1660px] h-[1038px] flex flex-col overflow-hidden bg-[#535353] font-['Liberation_Sans','Noto_Sans_CJK_SC',sans-serif] text-[12px]">
      <MenuBar />
      <OptionsBar />
      <div className="flex-1 min-h-0 flex">
        <Workspace />
        <div className="flex-1 min-w-0 flex flex-col">
          <div className="h-[12px] shrink-0 flex items-center pl-[25px] bg-[#3c3c3c] border-b border-[#2e2e2e]">
            <Chevrons />
          </div>
          <div className="flex-1 min-h-0 flex">
            <Dock />
            <Panels />
          </div>
        </div>
      </div>
    </div>
  );
}
